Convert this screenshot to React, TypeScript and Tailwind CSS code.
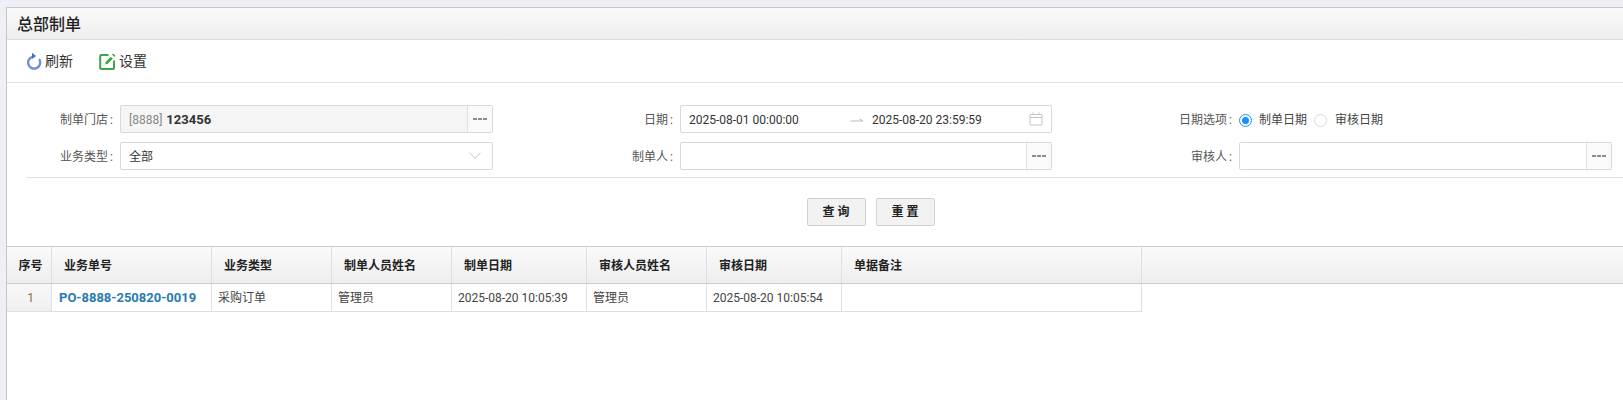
const font = { fontFamily: '"Roboto", "Noto Sans CJK SC", sans-serif' };

function Dots() {
  return (
    <span className="flex w-[25px] shrink-0 items-center justify-center gap-[1px] self-stretch border-l border-[#dcdfe6] bg-[#fafafa]">
      <i className="h-[2px] w-[4px] bg-[#8c8c8c]" />
      <i className="h-[2px] w-[4px] bg-[#8c8c8c]" />
      <i className="h-[2px] w-[4px] bg-[#8c8c8c]" />
    </span>
  );
}

function Item({ label, width, children }: { label: string; width: string; children: React.ReactNode }) {
  return (
    <div className={`flex shrink-0 items-center ${width}`}>
      <span className="flex w-[94px] shrink-0 justify-end pr-[7px] pt-[2px] text-[12px] text-[#555]">
        {label}
        <span className="ml-[2px]">:</span>
      </span>
      {children}
    </div>
  );
}

function Box({ children, bg, width }: { children?: React.ReactNode; bg: string; width: string }) {
  return (
    <div className={`flex h-[28px] items-center rounded-[2px] border border-[#d9d9d9] text-[12px] ${bg} ${width}`}>
      <div className="flex min-w-0 flex-1 items-center pl-[8px] pt-[2px]">{children}</div>
      <Dots />
    </div>
  );
}

const cols = [
  ['序号', 'w-[45px]', 'justify-center pl-[3px]'],
  ['业务单号', 'w-[160px]', 'pl-[12px]'],
  ['业务类型', 'w-[120px]', 'pl-[12px]'],
  ['制单人员姓名', 'w-[120px]', 'pl-[12px]'],
  ['制单日期', 'w-[135px]', 'pl-[12px]'],
  ['审核人员姓名', 'w-[120px]', 'pl-[12px]'],
  ['审核日期', 'w-[135px]', 'pl-[12px]'],
  ['单据备注', 'w-[300px]', 'pl-[12px]'],
];

const row = [
  ['1', 'justify-center bg-gradient-to-b from-[#f8f8f8] to-[#f0f0f0] pl-[3px] text-[12px] text-[#8a6d3b]'],
  ['PO-8888-250820-0019', 'pl-[7px] text-[13px] font-bold text-[#2a7ab0]'],
  ['采购订单', 'pl-[6px] text-[12px] text-[#444]'],
  ['管理员', 'pl-[6px] text-[12px] text-[#444]'],
  ['2025-08-20 10:05:39', 'pl-[6px] text-[12px] text-[#444]'],
  ['管理员', 'pl-[6px] text-[12px] text-[#444]'],
  ['2025-08-20 10:05:54', 'pl-[6px] text-[12px] text-[#444]'],
  ['', ''],
];

export default function App() {
  return (
    <div className="h-[400px] overflow-hidden bg-[#eef0f5] pl-[6px] pt-[7px] text-[#333]" style={font}>
      <div className="h-[393px] border-l border-t border-[#c4c6cc] bg-white">
        <div className="flex h-[32px] items-center border-b border-[#dcdcdc] bg-gradient-to-b from-[#fafafa] to-[#eeeeee] pl-[10px] pt-[2px] text-[16px] font-medium text-[#222]">
          总部制单
        </div>
        <div className="flex h-[43px] items-center border-b border-[#e0e0e0] pl-[19px] text-[14px] text-[#333]">
          <svg width="16" height="18" viewBox="0 0 16 18" className="mr-[3px]">
            <path d="M6.5 4.8A6 6 0 1 0 13.6 8" fill="none" stroke="#6f8fdc" strokeWidth="2.4" strokeLinecap="round" />
            <path d="M6 0.8 L10 3.9 L6 7 Z" fill="#4a6fc0" />
          </svg>
          <span className="mr-[26px]">刷新</span>
          <svg width="17" height="17" viewBox="0 0 17 17" className="mr-[3px]">
            <path d="M9.5 2H2.2A1 1 0 0 0 1.2 3V15A1 1 0 0 0 2.2 16H14A1 1 0 0 0 15 15V7.5" fill="none" stroke="#3fa648" strokeWidth="2" />
            <path d="M6 11.5 L6.8 8.8 L11.8 3.8 L13.8 5.8 L8.8 10.8 Z" fill="#3fa648" />
            <path d="M13 1.6 L14.2 0.6 L16.4 2.8 L15.2 4 Z" fill="#3fa648" />
          </svg>
          <span>设置</span>
        </div>

        <div className="flex flex-col gap-[9px] pl-[19px] pt-[22px]">
          <div className="flex">
            <Item label="制单门店" width="w-[560px]">
              <Box bg="bg-[#f5f5f5]" width="w-[373px]">
                <span className="text-[#888]">[8888]</span>
                <span className="ml-[4px] text-[13px] leading-[16px] font-bold text-[#333]">123456</span>
              </Box>
            </Item>
            <Item label="日期" width="w-[559px]">
              <div className="flex h-[28px] w-[372px] items-center rounded-[2px] border border-[#d9d9d9] pl-[8px] pr-[8px] pt-[2px] text-[12px] text-[#333]">
                <span className="w-[161px]">2025-08-01 00:00:00</span>
                <svg width="14" height="8" viewBox="0 0 14 8" className="mr-[8px]">
                  <path d="M0.5 5H13L9.5 3" fill="none" stroke="#bbb" />
                </svg>
                <span className="flex-1">2025-08-20 23:59:59</span>
                <svg width="14" height="14" viewBox="0 0 14 14" className="-mt-[2px]">
                  <path d="M1 2.5H13V13H1ZM1 5.5H13M4 0.5V3M10 0.5V3" fill="none" stroke="#c4c4c4" />
                </svg>
              </div>
            </Item>
            <Item label="日期选项" width="w-[560px]">
              <div className="flex items-center pt-[2px] text-[12px] text-[#444]">
                <span className="flex h-[13px] w-[13px] items-center justify-center rounded-full border border-[#1890ff]">
                  <i className="h-[7px] w-[7px] rounded-full bg-[#1890ff]" />
                </span>
                <span className="ml-[7px] mr-[7px]">制单日期</span>
                <span className="h-[13px] w-[13px] rounded-full border border-[#d9d9d9]" />
                <span className="ml-[8px]">审核日期</span>
              </div>
            </Item>
          </div>
          <div className="flex">
            <Item label="业务类型" width="w-[560px]">
              <div className="flex h-[28px] w-[373px] items-center justify-between rounded-[2px] border border-[#d9d9d9] pl-[8px] pr-[11px] pt-[2px] text-[12px] text-[#333]">
                <span>全部</span>
                <svg width="12" height="8" viewBox="0 0 12 8" className="-mt-[2px]">
                  <path d="M0.7 0.7L6 6.5L11.3 0.7" fill="none" stroke="#c4c4c4" />
                </svg>
              </div>
            </Item>
            <Item label="制单人" width="w-[559px]"><Box bg="bg-white" width="w-[372px]" /></Item>
            <Item label="审核人" width="w-[560px]"><Box bg="bg-white" width="w-[373px]" /></Item>
          </div>
        </div>

        <div className="ml-[19px] mt-[7px] border-t border-[#e0e0e0]" />

        <div className="flex justify-center gap-[10px] pl-[112px] pt-[20px]">
          <button className="h-[28px] w-[59px] rounded-[2px] border border-[#d0d0d0] bg-[#f2f2f2] pl-[2px] text-[12px] font-bold tracking-[3px] text-[#222]">查询</button>
          <button className="h-[28px] w-[59px] rounded-[2px] border border-[#d0d0d0] bg-[#f2f2f2] pl-[2px] text-[12px] font-bold tracking-[3px] text-[#222]">重置</button>
        </div>

        <div className="mt-[20px] border-t border-[#c8cbd2]">
          <div className="flex h-[37px] border-b border-[#c8cbd2] bg-gradient-to-b from-[#fafafa] to-[#eeeeee]">
            {cols.map(([t, w, c]) => (
              <div key={t} className={`flex items-center border-r border-[#dcdfe6] pt-[2px] text-[12px] font-bold text-[#222] ${w} ${c}`}>{t}</div>
            ))}
          </div>
          <div className="flex h-[28px] w-fit border-b border-[#dcdfe6]">
            {row.map(([t, c], i) => (
              <div key={i} className={`flex items-center border-r border-[#dcdfe6] pt-[1px] ${cols[i][1]} ${c}`}>{t}</div>
            ))}
          </div>
        </div>
      </div>
    </div>
  );
}
